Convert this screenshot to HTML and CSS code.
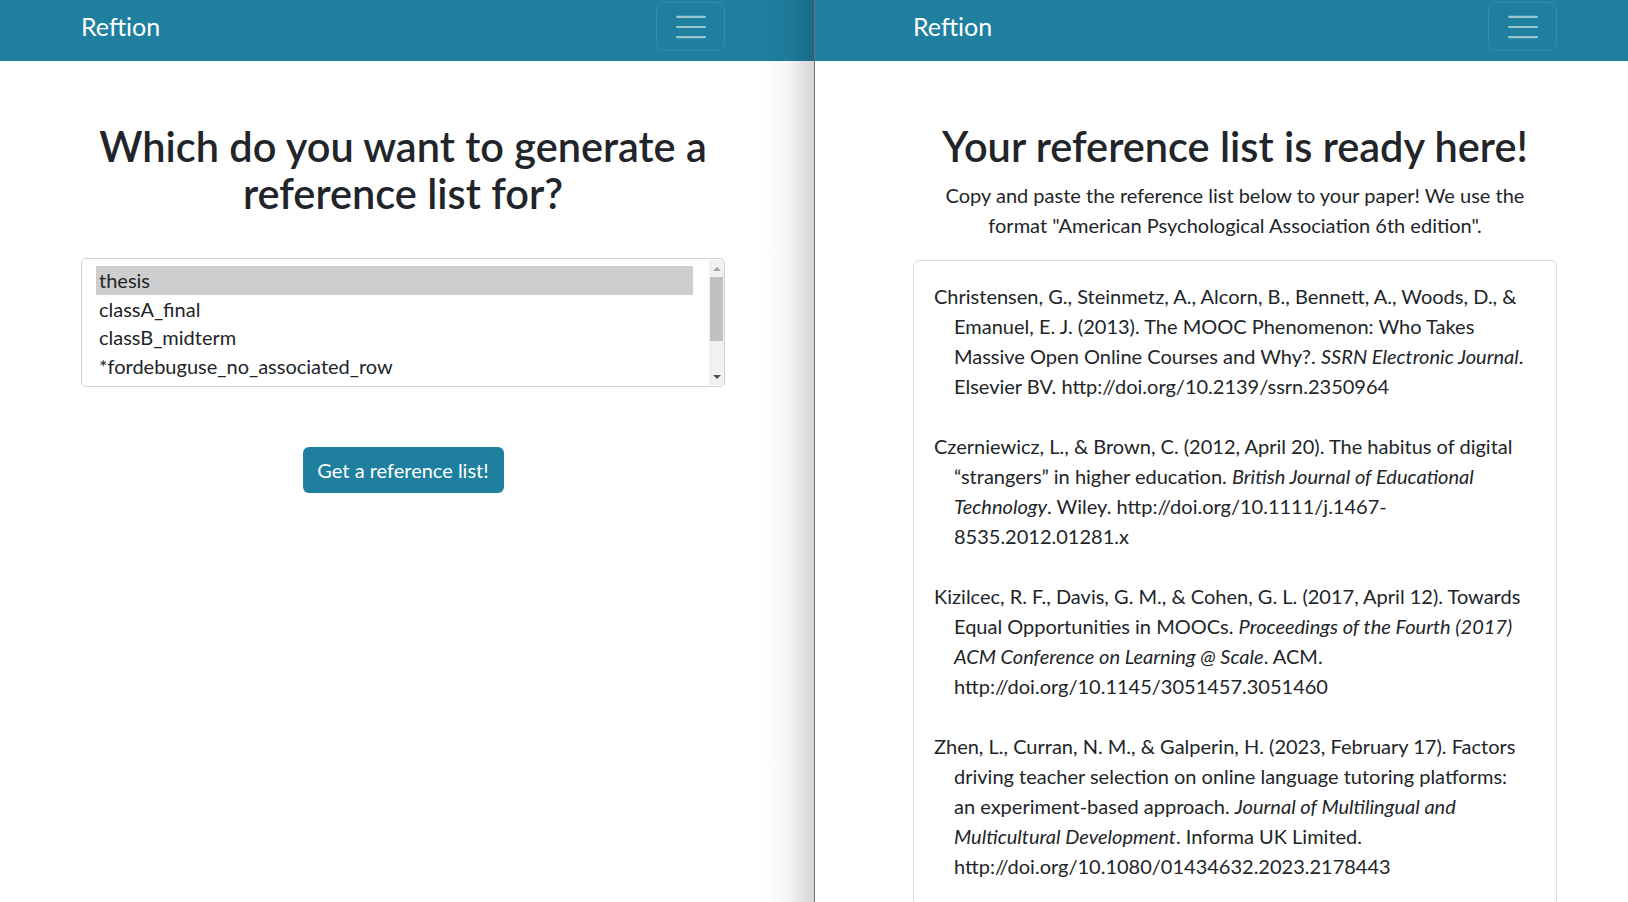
FILE: index.html
```html
<!DOCTYPE html>
<html lang="en">
<head>
<meta charset="utf-8">
<title>Reftion</title>
<link rel="stylesheet" href="styles.css">
</head>
<body>
<div class="app">
  <section class="pane pane-left">
    <nav class="navbar">
      <div class="nav-inner">
        <span class="brand">Reftion</span>
        <button class="toggler" aria-label="Toggle navigation">
          <svg width="38" height="38" viewBox="0 0 30 30"><path d="M4 7h22M4 15h22M4 23h22" stroke="rgba(255,255,255,0.55)" stroke-width="1.7" stroke-linecap="round" fill="none"/></svg>
        </button>
      </div>
    </nav>
    <main class="content">
      <h1 class="title">Which do you want to generate a<br>reference list for?</h1>
      <div class="select">
        <div class="options">
          <div class="option selected">thesis</div>
          <div class="option">classA_final</div>
          <div class="option">classB_midterm</div>
          <div class="option">*fordebuguse_no_associated_row</div>
          <div class="option">*fordebuguse_no_associated_col</div>
        </div>
        <div class="scrollbar">
          <span class="arrow up"></span>
          <div class="track"><div class="thumb"></div></div>
          <span class="arrow down"></span>
        </div>
      </div>
      <div class="actions">
        <button class="btn">Get a reference list!</button>
      </div>
    </main>
  </section>

  <section class="pane pane-right">
    <nav class="navbar">
      <div class="nav-inner">
        <span class="brand">Reftion</span>
        <button class="toggler" aria-label="Toggle navigation">
          <svg width="38" height="38" viewBox="0 0 30 30"><path d="M4 7h22M4 15h22M4 23h22" stroke="rgba(255,255,255,0.55)" stroke-width="1.7" stroke-linecap="round" fill="none"/></svg>
        </button>
      </div>
    </nav>
    <main class="content">
      <h1 class="title">Your reference list is ready here!</h1>
      <p class="lead">Copy and paste the reference list below to your paper! We use the<br>format "American Psychological Association 6th edition".</p>
      <div class="card">
        <p class="ref">Christensen, G., Steinmetz, A., Alcorn, B., Bennett, A., Woods, D., &amp;<br>Emanuel, E. J. (2013). The MOOC Phenomenon: Who Takes<br>Massive Open Online Courses and Why?. <i>SSRN Electronic Journal</i>.<br>Elsevier BV. http://doi.org/10.2139/ssrn.2350964</p>
        <p class="ref">Czerniewicz, L., &amp; Brown, C. (2012, April 20). The habitus of digital<br>“strangers” in higher education. <i>British Journal of Educational<br>Technology</i>. Wiley. http://doi.org/10.1111/j.1467-<br>8535.2012.01281.x</p>
        <p class="ref">Kizilcec, R. F., Davis, G. M., &amp; Cohen, G. L. (2017, April 12). Towards<br>Equal Opportunities in MOOCs. <i>Proceedings of the Fourth (2017)<br>ACM Conference on Learning @ Scale</i>. ACM.<br>http://doi.org/10.1145/3051457.3051460</p>
        <p class="ref">Zhen, L., Curran, N. M., &amp; Galperin, H. (2023, February 17). Factors<br>driving teacher selection on online language tutoring platforms:<br>an experiment-based approach. <i>Journal of Multilingual and<br>Multicultural Development</i>. Informa UK Limited.<br>http://doi.org/10.1080/01434632.2023.2178443</p>
      </div>
    </main>
  </section>
</div>
</body>
</html>
```

FILE: styles.css
```css
html, body {
  margin: 0;
  padding: 0;
  height: 100%;
  overflow: hidden;
}

body {
  font-family: Lato, "Open Sans", sans-serif;
  color: #212529;
  background: #ffffff;
}

.app {
  display: flex;
  height: 902px;
}

.pane {
  height: 902px;
  overflow: hidden;
  box-sizing: border-box;
}

.pane-left {
  width: 815px;
  flex: none;
  border-right: 1px solid #727272;
  position: relative;
}

.pane-left::after {
  content: "";
  position: absolute;
  top: 0;
  right: 0;
  bottom: 0;
  width: 50px;
  background: linear-gradient(to right, rgba(0, 0, 0, 0) 0%, rgba(0, 0, 0, 0.04) 50%, rgba(0, 0, 0, 0.17) 100%);
  pointer-events: none;
}

.pane-right {
  flex: 1;
}

.navbar {
  height: 61px;
  background: #1e7f9e;
}

.nav-inner,
.content {
  width: 644px;
}

.pane-left .nav-inner,
.pane-left .content {
  margin-left: 81px;
}

.pane-right .nav-inner,
.pane-right .content {
  margin-left: 98px;
}

.nav-inner {
  height: 52px;
  display: flex;
  align-items: center;
  justify-content: space-between;
}

.brand {
  color: #ffffff;
  font-size: 25px;
  line-height: 1;
  padding-top: 1px;
}

.toggler {
  width: 69px;
  height: 49px;
  margin-top: 1px;
  padding: 0;
  display: flex;
  align-items: center;
  justify-content: center;
  background: transparent;
  border: 1px solid rgba(255, 255, 255, 0.1);
  border-radius: 8px;
}

.title {
  margin: 62px 0 0;
  font-size: 41.5px;
  line-height: 46.5px;
  font-weight: 600;
  text-align: center;
  color: #212529;
}

.select {
  margin-top: 42px;
  height: 129px;
  box-sizing: border-box;
  border: 1px solid #ced4da;
  border-radius: 5px;
  display: flex;
  overflow: hidden;
}

.options {
  flex: 1;
  padding: 7px 16px 0 14px;
  overflow: hidden;
}

.option {
  height: 28.5px;
  line-height: 28.5px;
  padding-left: 3px;
  font-size: 20px;
  white-space: nowrap;
}

.option.selected {
  background: #cecece;
}

.scrollbar {
  width: 15px;
  background: #f1f1f1;
  display: flex;
  flex-direction: column;
  margin: 1px 0;
}

.arrow {
  height: 17px;
  display: flex;
  align-items: center;
  justify-content: center;
}

.arrow::before {
  content: "";
  border-left: 4px solid transparent;
  border-right: 4px solid transparent;
}

.arrow.up::before {
  border-bottom: 4px solid #a3a3a3;
}

.arrow.down::before {
  border-top: 4px solid #505050;
}

.track {
  flex: 1;
}

.thumb {
  height: 64px;
  margin: 0 1px;
  background: #c1c1c1;
}

.actions {
  display: flex;
  justify-content: center;
  margin-top: 60px;
}

.btn {
  width: 201px;
  height: 46px;
  padding: 0;
  font-family: inherit;
  font-size: 20px;
  color: #ffffff;
  background: #1e7f9e;
  border: none;
  border-radius: 6px;
}

.lead {
  margin: 10px 0 0;
  font-size: 20px;
  line-height: 30px;
  text-align: center;
}

.card {
  margin-top: 20px;
  min-height: 700px;
  box-sizing: border-box;
  border: 1px solid #dcdcdc;
  border-radius: 6px;
  padding: 20px 20px 0;
}

.ref {
  margin: 0 0 30px;
  padding-left: 20px;
  text-indent: -20px;
  font-size: 20px;
  line-height: 30px;
  white-space: nowrap;
}
```
